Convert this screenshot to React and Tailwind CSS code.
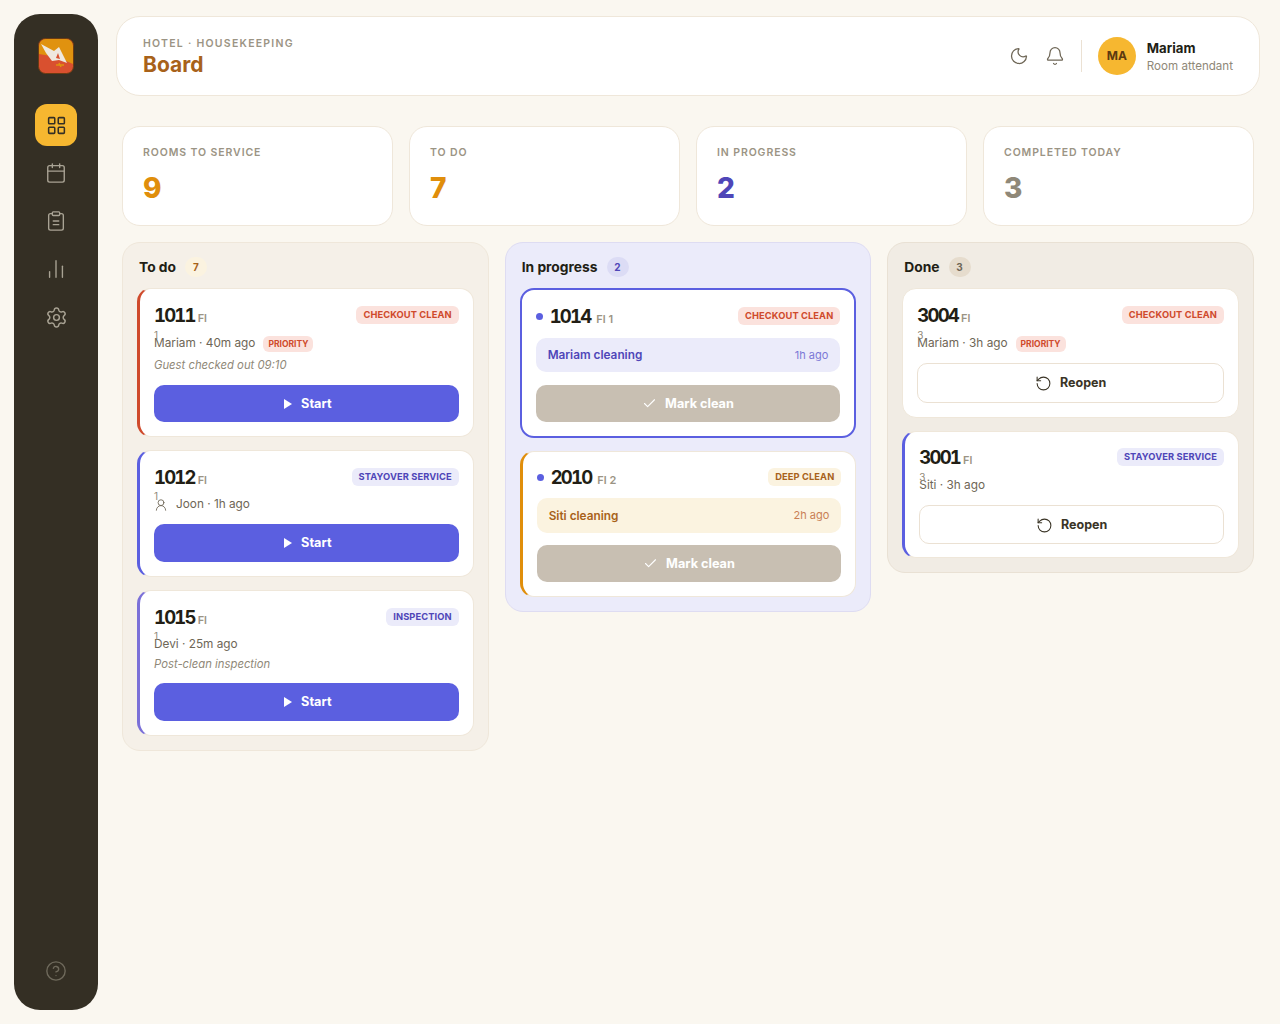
import { Bell, Calendar, Check, ChartNoAxesColumn, CircleHelp, LayoutGrid, Moon, RotateCcw, Settings, UserRound } from "lucide-react";

const stats = [
  { label: "ROOMS TO SERVICE", value: "9", color: "text-[#e08e0b]" },
  { label: "TO DO", value: "7", color: "text-[#e08e0b]" },
  { label: "IN PROGRESS", value: "2", color: "text-[#4f46b8]" },
  { label: "COMPLETED TODAY", value: "3", color: "text-[#8f8878]" },
];

const tagStyles = {
  checkout: "bg-[#fbe2dd] text-[#cf4a2c]",
  stayover: "bg-[#ebebfa] text-[#4f46b8]",
  deep: "bg-[#fbf3e0] text-[#a8621a]",
};

const Tag = ({ kind, children }) => (
  <span className={`rounded-md px-[7px] py-[3px] text-[9.3px] leading-[12px] font-bold tracking-[0.1px] ${tagStyles[kind]}`}>
    {children}
  </span>
);

const Priority = () => (
  <span className="ml-2 rounded-md bg-[#fbe2dd] px-[5px] py-[2px] text-[8.5px] leading-[12px] font-bold text-[#cf4a2c]">
    PRIORITY
  </span>
);

const StartButton = ({ height }) => (
  <button className={`flex w-full items-center justify-center gap-[9px] rounded-[10px] bg-[#5b5fe0] pl-[3px] text-[12.7px] font-bold text-white ${height}`}>
    <svg width="8" height="10" viewBox="0 0 8 10"><path d="M0 0L8 5L0 10z" fill="white" /></svg>
    Start
  </button>
);

const ReopenButton = ({ height }) => (
  <button className={`flex w-full items-center justify-center gap-2 rounded-[10px] border border-[#ebe1d3] bg-white pt-px text-[12.5px] font-bold text-[#3a3426] ${height}`}>
    <RotateCcw size={17} strokeWidth={1.5} />
    Reopen
  </button>
);

const MarkClean = () => (
  <button className="flex h-[37px] w-full items-center justify-center gap-2 rounded-[10px] bg-[#c8bfb2] text-[12.7px] font-bold text-white">
    <Check size={15} strokeWidth={1.75} />
    Mark clean
  </button>
);

const Meta = ({ floor, icon, children }) => (
  <div className="relative flex h-[20px] items-center text-[11.8px] text-[#6e6656]">
    <span className="absolute top-[-5px] left-0 text-[10px] leading-[12px] text-[#8f8878]">{floor}</span>
    {icon && <UserRound size={14} strokeWidth={1.5} className="mr-2" />}
    {children}
  </div>
);

const RoomHead = ({ room, tag, kind }) => (
  <div className="flex h-[24px] items-center justify-between">
    <div className="flex items-baseline gap-[3px]">
      <span className="text-[18.5px] leading-[24px] font-bold tracking-[-1.8px] text-[#221e15] tabular-nums">{room}</span>
      <span className="text-[11px] leading-[12px] font-semibold text-[#9b9484]">Fl</span>
    </div>
    <Tag kind={kind}>{tag}</Tag>
  </div>
);

const QueueCard = ({ room, tag, kind, floor, who, priority, note, accent, icon, metaGap, noteGap, gap, height }) => (
  <div className={`rounded-[14px] border border-[#efe7da] border-l-[3px] bg-white pt-[14px] pr-[14px] pb-[14px] pl-[14px] ${accent}`}>
    <RoomHead room={room} tag={tag} kind={kind} />
    <div className={metaGap}>
      <Meta floor={floor} icon={icon}>
        {who}
        {priority && <Priority />}
      </Meta>
    </div>
    {note && <div className={`h-[18px] text-[11.3px] leading-[18px] text-[#8f8878] italic ${noteGap}`}>{note}</div>}
    <div className={gap}>
      <StartButton height={height} />
    </div>
  </div>
);

const ActiveCard = ({ room, floor, tag, kind, who, ago, wrap, strip, stripGap, buttonGap, whoColor, agoColor }) => (
  <div className={`rounded-[14px] bg-white ${wrap}`}>
    <div className="flex h-[24px] items-center justify-between">
      <div className="flex items-baseline gap-[6px]">
        <span className="mr-[1px] h-[7px] w-[7px] self-center rounded-full bg-[#5b5fe0]" />
        <span className="text-[18.5px] leading-[24px] font-bold tracking-[-1.8px] text-[#221e15] tabular-nums">{room}</span>
        <span className="text-[11px] leading-[12px] font-semibold text-[#9b9484]">{floor}</span>
      </div>
      <Tag kind={kind}>{tag}</Tag>
    </div>
    <div className={`flex items-center justify-between rounded-[10px] px-3 ${strip} ${stripGap}`}>
      <span className={`mt-[2px] text-[11.8px] font-semibold ${whoColor}`}>{who}</span>
      <span className={`text-[11px] ${agoColor}`}>{ago}</span>
    </div>
    <div className={buttonGap}>
      <MarkClean />
    </div>
  </div>
);

const Column = ({ title, count, wrap, pill, children }) => (
  <section className={`rounded-[18px] border px-[14px] pt-[13px] pb-[14px] ${wrap}`}>
    <div className="mb-[10px] flex h-[22px] items-center gap-[9px] pl-[2px]">
      <h2 className="text-[13.8px] font-bold text-[#221e15]">{title}</h2>
      <span className={`flex h-[20px] w-[22px] items-center justify-center rounded-full text-[10px] font-bold ${pill}`}>{count}</span>
    </div>
    <div className="flex flex-col gap-[13px]">{children}</div>
  </section>
);

export default function App() {
  return (
    <div className="flex min-h-[1024px] bg-[#faf7f0] font-['Inter',sans-serif]">
      {/* Sidebar */}
      <aside className="mt-[14px] ml-[14px] flex h-[996px] w-[84px] shrink-0 flex-col items-center rounded-[26px] bg-[#342f24] pt-[24px] pb-[28px]">
        <svg width="36" height="36" viewBox="0 0 36 36">
          <rect x="0.5" y="0.5" width="35" height="35" rx="7" fill="#d9502f" stroke="#6b3b12" />
          <path d="M8 1h20a7 7 0 0 1 7 7v18L19 19 1 16V8a7 7 0 0 1 7-7z" fill="#e0920f" />
          <path d="M3 6L16 13L21 9L29 25L21 22L14 23L8 15z" fill="#efe8de" />
          <path d="M20 15l-2 5 4 1z" fill="#d9502f" />
          <path d="M18 27h8M21 25l2 4" stroke="#e0920f" strokeWidth="1.6" />
        </svg>
        <div className="mt-[30px] flex h-[42px] w-[42px] items-center justify-center rounded-[12px] bg-[#f6b730] text-[#342f24]">
          <LayoutGrid size={21} strokeWidth={1.75} />
        </div>
        <nav className="mt-[3px] flex flex-col items-center text-[#a9a394]">
          <div className="flex h-[48px] w-[42px] items-center justify-center"><Calendar size={22} strokeWidth={1.5} /></div>
          <div className="flex h-[48px] w-[42px] items-center justify-center">
            <svg width="22" height="22" viewBox="0 0 24 24" fill="none" stroke="currentColor" strokeWidth="1.5" strokeLinecap="round" strokeLinejoin="round">
              <rect x="8" y="2" width="8" height="4" rx="1" />
              <path d="M16 4h2a2 2 0 0 1 2 2v14a2 2 0 0 1-2 2H6a2 2 0 0 1-2-2V6a2 2 0 0 1 2-2h2" />
              <path d="M9 12h6M9 16h6" />
            </svg>
          </div>
          <div className="flex h-[48px] w-[42px] items-center justify-center"><ChartNoAxesColumn size={22} strokeWidth={1.5} /></div>
          <div className="flex h-[48px] w-[42px] items-center justify-center"><Settings size={23} strokeWidth={1.5} /></div>
        </nav>
        <CircleHelp size={22} strokeWidth={1.5} className="mt-auto text-[#6f6a5c]" />
      </aside>

      <main className="flex-1 pt-[16px] pr-[20px] pl-[18px]">
        {/* Top bar */}
        <header className="flex h-[80px] items-center justify-between rounded-[24px] border border-[#efe7da] bg-white pr-[26px] pl-[26px]">
          <div className="mt-[4px]">
            <div className="text-[10.5px] leading-[14px] font-semibold tracking-[1.25px] text-[#9b9484]">HOTEL · HOUSEKEEPING</div>
            <h1 className="text-[21px] leading-[28px] font-bold text-[#a8621a]">Board</h1>
          </div>
          <div className="flex items-center">
            <Moon size={20} strokeWidth={1.5} className="text-[#6e6656]" />
            <Bell size={20} strokeWidth={1.5} className="ml-[16px] text-[#6e6656]" />
            <div className="mx-[16px] h-[32px] w-px bg-[#ebe1d3]" />
            <div className="flex h-[38px] w-[38px] items-center justify-center rounded-full bg-[#f6b730] text-[12px] font-bold text-[#5c3a10]">MA</div>
            <div className="ml-[11px]">
              <div className="text-[13.2px] leading-[18px] font-bold text-[#221e15]">Mariam</div>
              <div className="mt-[1px] text-[11.6px] leading-[16px] text-[#8f8878]">Room attendant</div>
            </div>
          </div>
        </header>

        <div className="mt-[30px] mr-[6px] ml-[6px]">
          {/* Stats */}
          <div className="grid grid-cols-4 gap-4">
            {stats.map((s) => (
              <div key={s.label} className="h-[100px] rounded-[18px] border border-[#efe7da] bg-white px-[20px] pt-[19px]">
                <div className="text-[10.5px] leading-[14px] font-semibold tracking-[0.9px] text-[#9b9484]">{s.label}</div>
                <div className={`mt-[10px] text-[28px] leading-[36px] font-extrabold ${s.color}`}>{s.value}</div>
              </div>
            ))}
          </div>

          {/* Board */}
          <div className="mt-[16px] grid grid-cols-3 items-start gap-4">
            <Column title="To do" count="7" wrap="bg-[#f5f0e8] border-[#efe7da]" pill="bg-[#fbf3e0] text-[#a8621a]">
              <QueueCard room="1011" tag="CHECKOUT CLEAN" kind="checkout" floor="1" who="Mariam · 40m ago" priority note="Guest checked out 09:10" accent="border-l-[#cf4a2c]" metaGap="mt-[7px]" noteGap="mt-[2px]" gap="mt-[11px]" height="h-[37px]" />
              <QueueCard room="1012" tag="STAYOVER SERVICE" kind="stayover" floor="1" who="Joon · 1h ago" icon accent="border-l-[#5b5fe0]" metaGap="mt-[6px]" gap="mt-[9px]" height="h-[38px]" />
              <QueueCard room="1015" tag="INSPECTION" kind="stayover" floor="1" who="Devi · 25m ago" note="Post-clean inspection" accent="border-l-[#7b70d8]" metaGap="mt-[6px]" noteGap="mt-0" gap="mt-[10px]" height="h-[38px]" />
            </Column>

            <Column title="In progress" count="2" wrap="bg-[#ebebfa] border-[#dedcf2]" pill="bg-[#dcdcf5] text-[#4f46b8]">
              <ActiveCard room="1014" floor="Fl 1" tag="CHECKOUT CLEAN" kind="checkout" who="Mariam cleaning" ago="1h ago" wrap="border-2 border-[#5b5fe0] p-[14px]" strip="h-[34px] bg-[#ebebfa]" stripGap="mt-[10px]" buttonGap="mt-[13px]" whoColor="text-[#4f46b8]" agoColor="text-[#7b78d6]" />
              <ActiveCard room="2010" floor="Fl 2" tag="DEEP CLEAN" kind="deep" who="Siti cleaning" ago="2h ago" wrap="border border-[#efe7da] border-l-[3px] border-l-[#e08e0b] p-[14px] pt-[13px]" strip="h-[35px] bg-[#fbf3e0]" stripGap="mt-[9px]" buttonGap="mt-[12px]" whoColor="text-[#a8621a]" agoColor="text-[#c97f55]" />
            </Column>

            <Column title="Done" count="3" wrap="bg-[#f1ece4] border-[#e9e1d4]" pill="bg-[#e6dccd] text-[#6e6656]">
              <div className="rounded-[14px] border border-[#efe7da] bg-white p-[14px]">
                <RoomHead room="3004" tag="CHECKOUT CLEAN" kind="checkout" />
                <div className="mt-[7px]"><Meta floor="3">Mariam · 3h ago<Priority /></Meta></div>
                <div className="mt-[9px]"><ReopenButton height="h-[40px]" /></div>
              </div>
              <div className="rounded-[14px] border border-[#efe7da] border-l-[3px] border-l-[#5b5fe0] bg-white p-[14px] pt-[13px] pb-[13px]">
                <RoomHead room="3001" tag="STAYOVER SERVICE" kind="stayover" />
                <div className="mt-[7px]"><Meta floor="3">Siti · 3h ago</Meta></div>
                <div className="mt-[9px]"><ReopenButton height="h-[39px]" /></div>
              </div>
            </Column>
          </div>
        </div>
      </main>
    </div>
  );
}
